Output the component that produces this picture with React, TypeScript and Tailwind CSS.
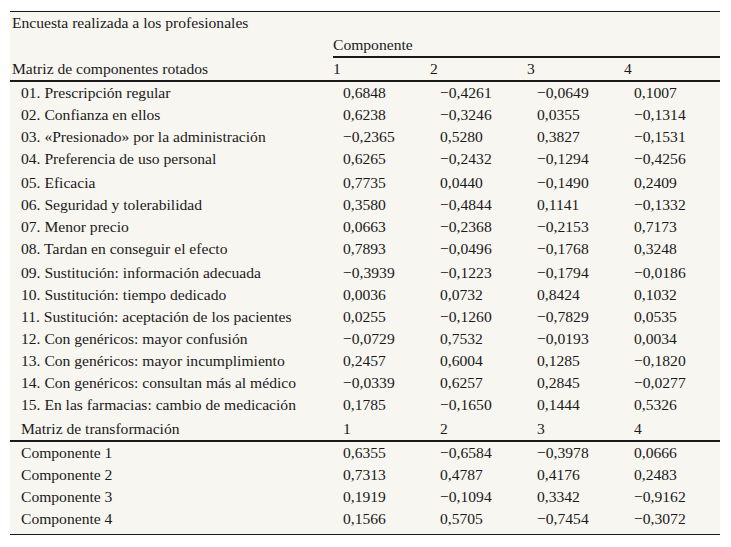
import React from "react";

const rows: [string, string, string, string, string, boolean?][] = [
  ["01. Prescripción regular", "0,6848", "−0,4261", "−0,0649", "0,1007"],
  ["02. Confianza en ellos", "0,6238", "−0,3246", "0,0355", "−0,1314"],
  ["03. «Presionado» por la administración", "−0,2365", "0,5280", "0,3827", "−0,1531"],
  ["04. Preferencia de uso personal", "0,6265", "−0,2432", "−0,1294", "−0,4256", true],
  ["05. Eficacia", "0,7735", "0,0440", "−0,1490", "0,2409"],
  ["06. Seguridad y tolerabilidad", "0,3580", "−0,4844", "0,1141", "−0,1332"],
  ["07. Menor precio", "0,0663", "−0,2368", "−0,2153", "0,7173"],
  ["08. Tardan en conseguir el efecto", "0,7893", "−0,0496", "−0,1768", "0,3248", true],
  ["09. Sustitución: información adecuada", "−0,3939", "−0,1223", "−0,1794", "−0,0186"],
  ["10. Sustitución: tiempo dedicado", "0,0036", "0,0732", "0,8424", "0,1032"],
  ["11. Sustitución: aceptación de los pacientes", "0,0255", "−0,1260", "−0,7829", "0,0535"],
  ["12. Con genéricos: mayor confusión", "−0,0729", "0,7532", "−0,0193", "0,0034"],
  ["13. Con genéricos: mayor incumplimiento", "0,2457", "0,6004", "0,1285", "−0,1820"],
  ["14. Con genéricos: consultan más al médico", "−0,0339", "0,6257", "0,2845", "−0,0277"],
  ["15. En las farmacias: cambio de medicación", "0,1785", "−0,1650", "0,1444", "0,5326", true],
];

const trans: [string, string, string, string, string][] = [
  ["Componente 1", "0,6355", "−0,6584", "−0,3978", "0,0666"],
  ["Componente 2", "0,7313", "0,4787", "0,4176", "0,2483"],
  ["Componente 3", "0,1919", "−0,1094", "0,3342", "−0,9162"],
  ["Componente 4", "0,1566", "0,5705", "−0,7454", "−0,3072"],
];

const grid = "grid grid-cols-[323px_97px_97px_97px_96px]";

export default function App() {
  return (
    <div className="w-[731px] h-[547px] bg-white pt-[11px] pl-[10px] font-['Liberation_Serif','Times_New_Roman',serif]">
      <div className="w-[710px] bg-[#f8f6f1] border-t border-b border-[#1a1a1a] text-[15.6px] leading-[22px] text-[#1a1a1a]">
        <div className="h-[22px] pl-[2px] whitespace-nowrap">Encuesta realizada a los profesionales</div>
        <div className={grid}>
          <div />
          <div className="col-span-4 border-b-2 border-[#1a1a1a] h-[24px]">Componente</div>
        </div>
        <div className={`${grid} border-b-2 border-[#1a1a1a] h-[24px] whitespace-nowrap`}>
          <div className="pl-[2px]">Matriz de componentes rotados</div>
          <div>1</div>
          <div>2</div>
          <div>3</div>
          <div>4</div>
        </div>
        {rows.map((r) => (
          <div key={r[0]} className={`${grid} ${r[5] ? "h-[24px]" : "h-[22px]"} whitespace-nowrap`}>
            <div className="pl-[11px]">{r[0]}</div>
            <div className="pl-[10px]">{r[1]}</div>
            <div className="pl-[10px]">{r[2]}</div>
            <div className="pl-[10px]">{r[3]}</div>
            <div className="pl-[10px]">{r[4]}</div>
          </div>
        ))}
        <div className={`${grid} border-b-2 border-[#1a1a1a] h-[24px] whitespace-nowrap`}>
          <div className="pl-[11px]">Matriz de transformación</div>
          <div className="pl-[10px]">1</div>
          <div className="pl-[10px]">2</div>
          <div className="pl-[10px]">3</div>
          <div className="pl-[10px]">4</div>
        </div>
        {trans.map((r, i) => (
          <div key={r[0]} className={`${grid} ${i === 3 ? "h-[26px]" : "h-[22px]"} whitespace-nowrap`}>
            <div className="pl-[11px]">{r[0]}</div>
            <div className="pl-[10px]">{r[1]}</div>
            <div className="pl-[10px]">{r[2]}</div>
            <div className="pl-[10px]">{r[3]}</div>
            <div className="pl-[10px]">{r[4]}</div>
          </div>
        ))}
      </div>
    </div>
  );
}
